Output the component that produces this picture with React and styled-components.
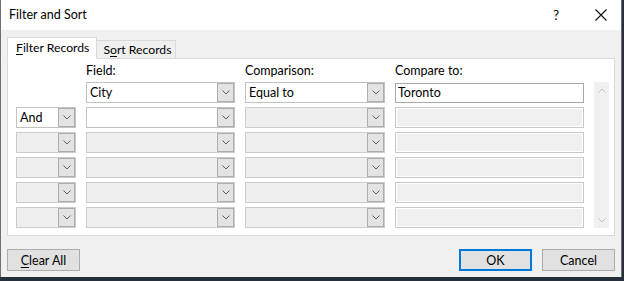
import React from "react";
import styled, { createGlobalStyle } from "styled-components";

const GlobalStyle = createGlobalStyle`
  html, body {
    margin: 0;
    padding: 0;
    background: #26303c;
  }
  body {
    font-family: Lato, "Noto Sans", sans-serif;
    font-size: 12px;
    color: #000;
  }
`;

const Chevron = ({ up, color = "#606060" }) => (
  <svg width="8" height="5" viewBox="0 0 8 5">
    <polyline
      points={up ? "0.5,4.5 4,1 7.5,4.5" : "0.5,0.5 4,4 7.5,0.5"}
      fill="none"
      stroke={color}
      strokeWidth="1"
    />
  </svg>
);

const CloseIcon = () => (
  <svg width="12" height="12" viewBox="0 0 12 12">
    <path d="M0.5 0.5 L11.5 11.5 M11.5 0.5 L0.5 11.5" stroke="#111" strokeWidth="1.1" />
  </svg>
);

export default function App() {
  const rows = [
    { and: null, field: "City", comp: "Equal to", value: "Toronto", active: true },
    { and: "And", field: "", comp: "", value: "", active: false, fieldOn: true },
    {},
    {},
    {},
    {},
  ];

  return (
    <>
      <GlobalStyle />
      <Window>
        <TitleBar>
          <Title>Filter and Sort</Title>
          <TitleButtons>
            <Help>?</Help>
            <CloseIcon />
          </TitleButtons>
        </TitleBar>
        <Body>
          <Tabs>
            <Tab $active>
              <u>F</u>ilter Records
            </Tab>
            <Tab>
              S<u>o</u>rt Records
            </Tab>
          </Tabs>
          <Panel>
            <Grid>
              <span />
              <Label>Field:</Label>
              <Label>Comparison:</Label>
              <Label>Compare to:</Label>
              <span />
              {rows.map((r, i) => (
                <React.Fragment key={i}>
                  {i === 0 ? (
                    <span />
                  ) : (
                    <Combo $enabled={!!r.and}>
                      <ComboText>{r.and}</ComboText>
                      <DropButton>
                        <Chevron />
                      </DropButton>
                    </Combo>
                  )}
                  <Combo $enabled={r.active || r.fieldOn}>
                    <ComboText>{r.field}</ComboText>
                    <DropButton>
                      <Chevron />
                    </DropButton>
                  </Combo>
                  <Combo $enabled={r.active}>
                    <ComboText>{r.comp}</ComboText>
                    <DropButton>
                      <Chevron />
                    </DropButton>
                  </Combo>
                  <TextBox $enabled={r.active}>{r.value}</TextBox>
                  {i === 0 && (
                    <ScrollBar>
                      <Chevron up color="#c4c4c4" />
                      <Chevron color="#c4c4c4" />
                    </ScrollBar>
                  )}
                </React.Fragment>
              ))}
            </Grid>
          </Panel>
          <Footer>
            <Button>
              <u>C</u>lear All
            </Button>
            <ButtonGroup>
              <Button $default>OK</Button>
              <Button>Cancel</Button>
            </ButtonGroup>
          </Footer>
        </Body>
      </Window>
    </>
  );
}

const Window = styled.div`
  width: 620px;
  height: 277px;
  border-left: 1px solid #707070;
  border-right: 1px solid #707070;
  background: #f0f0f0;
  display: flex;
  flex-direction: column;
`;

const TitleBar = styled.div`
  height: 30px;
  background: #fff;
  display: flex;
  align-items: center;
  justify-content: space-between;
  padding: 0 14px 0 8px;
`;

const Title = styled.div`
  font-size: 12.5px;
  padding-bottom: 1px;
`;

const TitleButtons = styled.div`
  display: flex;
  align-items: center;
  gap: 36px;
`;

const Help = styled.span`
  font-size: 13px;
  line-height: 1;
`;

const Body = styled.div`
  flex: 1;
  display: flex;
  flex-direction: column;
  padding: 7px 6px 5px 6px;
`;

const Tabs = styled.div`
  display: flex;
  align-items: flex-end;
  height: 22px;
  margin-bottom: -1px;
`;

const Tab = styled.div`
  box-sizing: border-box;
  height: ${(p) => (p.$active ? "22px" : "19px")};
  padding: ${(p) => (p.$active ? "0 7px 2px 8px" : "0 4px 1px 6px")};
  display: flex;
  align-items: center;
  background: ${(p) => (p.$active ? "#fff" : "#f0f0f0")};
  border: 1px solid #d9d9d9;
  border-bottom: ${(p) => (p.$active ? "1px solid #fff" : "1px solid #d9d9d9")};
  border-left: ${(p) => (p.$active ? "1px solid #d9d9d9" : "none")};
  font-size: 12.2px;
  white-space: nowrap;
  position: relative;
  z-index: ${(p) => (p.$active ? 1 : 0)};
  u {
    text-decoration-thickness: 1px;
    text-underline-offset: 2px;
  }
`;

const Panel = styled.div`
  background: #fff;
  border: 1px solid #d9d9d9;
  padding: 4px 4px 7px 8px;
`;

const Grid = styled.div`
  display: grid;
  grid-template-columns: 60px 149px 140px 189px 15px;
  grid-template-rows: 15px repeat(6, 21px);
  column-gap: 10px;
  row-gap: 4px;
`;

const Label = styled.div`
  font-size: 12.5px;
  line-height: 15px;
  white-space: nowrap;
`;

const Combo = styled.div`
  box-sizing: border-box;
  height: 21px;
  display: flex;
  border: 1px solid ${(p) => (p.$enabled ? "#c2c2c2" : "#cccccc")};
  background: ${(p) => (p.$enabled ? "#fff" : "#efefef")};
`;

const ComboText = styled.div`
  flex: 1;
  padding-left: 3px;
  line-height: 19px;
  font-size: 12.5px;
`;

const DropButton = styled.div`
  box-sizing: border-box;
  width: 17px;
  height: 19px;
  border: 1px solid #adadad;
  background: #e3e3e3;
  display: flex;
  align-items: center;
  justify-content: center;
`;

const TextBox = styled.div`
  box-sizing: border-box;
  height: ${(p) => (p.$enabled ? "20px" : "21px")};
  margin-top: ${(p) => (p.$enabled ? "1px" : "0")};
  border: 1px solid ${(p) => (p.$enabled ? "#a8a8a8" : "#c8c8c8")};
  box-shadow: ${(p) => (p.$enabled ? "none" : "inset 0 0 0 1px #fff")};
  background: ${(p) => (p.$enabled ? "#fff" : "#f0f0f0")};
  padding-left: 2px;
  line-height: 18px;
  font-size: 12.5px;
`;

const ScrollBar = styled.div`
  grid-column: 5;
  grid-row: 2 / span 6;
  background: #f0f0f0;
  display: flex;
  flex-direction: column;
  align-items: center;
  justify-content: space-between;
  padding: 6px 0 5px;
`;

const Footer = styled.div`
  margin-top: 13px;
  display: flex;
  justify-content: space-between;
`;

const ButtonGroup = styled.div`
  display: flex;
  gap: 10px;
`;

const Button = styled.div`
  box-sizing: border-box;
  width: 73px;
  height: 22px;
  display: flex;
  align-items: center;
  justify-content: center;
  background: #e1e1e1;
  border: 1px solid ${(p) => (p.$default ? "#0078d7" : "#adadad")};
  box-shadow: ${(p) => (p.$default ? "inset 0 0 0 1px #0078d7" : "none")};
  font-size: 12.5px;
  u {
    text-decoration-thickness: 1px;
    text-underline-offset: 2px;
  }
`;
